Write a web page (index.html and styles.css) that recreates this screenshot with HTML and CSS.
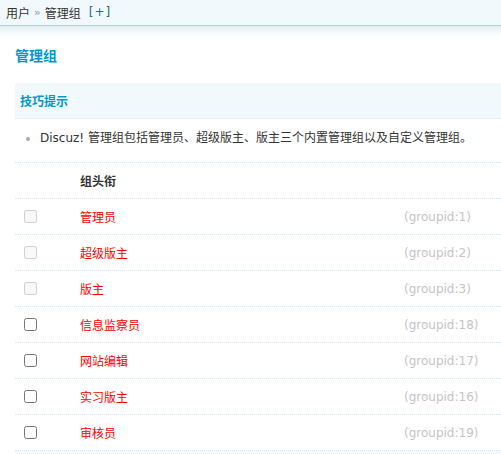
FILE: index.html
```html
<!DOCTYPE html>
<html>
<head>
<meta charset="utf-8">
<link rel="stylesheet" href="styles.css">
</head>
<body>
<div class="topbar">
  <span class="crumb">用户</span><span class="sep">»</span><span class="crumb">管理组</span><a class="add">[+]</a>
</div>
<div class="shadow"></div>
<div class="main">
  <h3 class="title">管理组</h3>
  <div class="tbl">
    <div class="tiphead">技巧提示</div>
    <ul class="tips">
      <li>Discuz! 管理组包括管理员、超级版主、版主三个内置管理组以及自定义管理组。</li>
    </ul>
    <div class="row head"><span></span><span class="name">组头衔</span><span></span></div>
    <div class="row"><span class="cb"><input type="checkbox" disabled></span><span class="name">管理员</span><span class="gid">(groupid:1)</span></div>
    <div class="row"><span class="cb"><input type="checkbox" disabled></span><span class="name">超级版主</span><span class="gid">(groupid:2)</span></div>
    <div class="row"><span class="cb"><input type="checkbox" disabled></span><span class="name">版主</span><span class="gid">(groupid:3)</span></div>
    <div class="row"><span class="cb"><input type="checkbox"></span><span class="name">信息监察员</span><span class="gid">(groupid:18)</span></div>
    <div class="row"><span class="cb"><input type="checkbox"></span><span class="name">网站编辑</span><span class="gid">(groupid:17)</span></div>
    <div class="row"><span class="cb"><input type="checkbox"></span><span class="name">实习版主</span><span class="gid">(groupid:16)</span></div>
    <div class="row"><span class="cb"><input type="checkbox"></span><span class="name">审核员</span><span class="gid">(groupid:19)</span></div>
    <div class="foot"></div>
  </div>
</div>
</body>
</html>
```
FILE: styles.css
```css
html, body {
  margin: 0;
  padding: 0;
  background: #fff;
  font-family: "DejaVu Sans", "Noto Sans CJK SC", sans-serif;
  font-size: 12px;
  color: #333;
  overflow: hidden;
}
.topbar {
  background: #f2f9fd;
  border-bottom: 1px solid #b5cfd9;
  display: flex;
  align-items: center;
  padding-left: 6px;
  line-height: 25px;
  box-sizing: border-box;
  height: 26px;
}
.crumb {
  font-family: "Noto Sans CJK SC", sans-serif;
  color: #333;
}
.sep {
  color: #999;
  margin: 0 4px;
  font-size: 11px;
}
.add {
  color: #2366a8;
  margin-left: 8px;
  letter-spacing: 1px;
}
.shadow {
  height: 10px;
  background: linear-gradient(#e4eef3, #fff);
}
.main {
  padding-left: 15px;
}
.title {
  margin: 9px 0 0 0;
  font-family: "Noto Sans CJK SC", sans-serif;
  font-size: 14px;
  font-weight: bold;
  color: #0099cc;
  line-height: 20px;
  height: 38px;
}
.tbl {
  width: 486px;
}
.tiphead {
  height: 35px;
  line-height: 35px;
  background: #f2f9fd;
  border-bottom: 1px dotted #d0e8f8;
  padding-left: 5px;
  font-family: "Noto Sans CJK SC", sans-serif;
  font-weight: bold;
  color: #0099cc;
}
.tips {
  margin: 0;
  padding: 9px 0 14px 25px;
  border-bottom: 1px dotted #d0e8f8;
  line-height: 20px;
  color: #333;
}
.tips li {
  list-style: disc;
  color: #333;
}
.tips li::marker {
  color: #aaa;
}
.row {
  display: grid;
  grid-template-columns: 65px 324px 1fr;
  height: 35px;
  align-items: center;
  border-bottom: 1px dotted #d0e8f8;
}
.row .name {
  font-family: "Noto Sans CJK SC", sans-serif;
  color: #ff0000;
}
.row.head .name {
  font-weight: bold;
  color: #333;
}
.cb {
  padding-left: 9px;
  display: flex;
  align-items: center;
}
.cb input {
  margin: 0;
  width: 13px;
  height: 13px;
}
.gid {
  color: #c4c4c4;
  font-size: 12px;
}
.foot {
  height: 10px;
  background: #f2f9fd;
}
```
